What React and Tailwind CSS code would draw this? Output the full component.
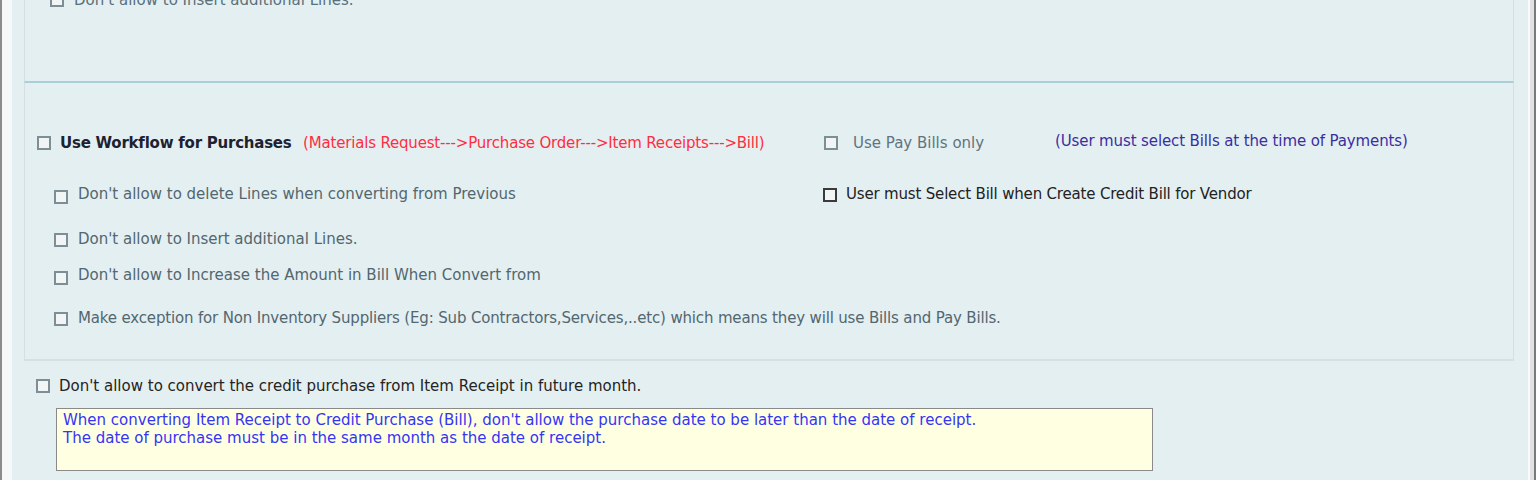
import React from 'react';

const font = "font-['DejaVu_Sans',sans-serif]";

const Box = ({ dark, className = '' }) => (
  <span
    className={`inline-block w-[14px] h-[14px] shrink-0 border-2 bg-[#f1f5f6] ${
      dark ? 'border-[#3a3a3a]' : 'border-[#7d8e95]'
    } ${className}`}
  />
);

const Option = ({ text, dark, className = '', textClass = '', boxClass = '' }) => (
  <label className={`flex items-center h-[20px] whitespace-nowrap ${className}`}>
    <Box dark={dark} className={boxClass} />
    <span className={textClass}>{text}</span>
  </label>
);

const subOptions = [
  { text: "Don't allow to delete Lines when converting from Previous", mt: 'mt-[30px]', box: 'mt-[4px]' },
  { text: "Don't allow to Insert additional Lines.", mt: 'mt-[25px]', box: '' },
  { text: "Don't allow to Increase the Amount in Bill When Convert from", mt: 'mt-[16px]', box: 'mt-[4px]' },
  {
    text: "Make exception for Non Inventory Suppliers (Eg: Sub Contractors,Services,..etc) which means they will use Bills and Pay Bills.",
    mt: 'mt-[23px]',
    box: '',
    text2: 'tracking-[-0.16px]',
  },
];

const App = () => {
  return (
    <div className={`flex w-[1536px] h-[480px] overflow-hidden text-[15px] ${font}`}>
      <div className="w-[2px] bg-[#8c8c8c]" />
      <div className="w-[10px] bg-[#f7f9f9]" />

      <div className="flex-1 flex flex-col bg-[#e4eff2] pl-[12px] pr-[14px]">
        {/* previous panel, cut off at the top */}
        <div className="h-[83px] shrink-0 border-x border-[#d6e0e3] border-b-2 border-b-[#a9cfd9]">
          <Option
            text="Don't allow to Insert additional Lines."
            className="-mt-[10px] ml-[25px] gap-[10px] text-[#5a707a]"
          />
        </div>

        {/* purchases workflow panel */}
        <div className="h-[278px] shrink-0 border-x border-b-2 border-[#d8dfe1] pt-[49px]">
          <div className="flex items-center">
            <Option
              text="Use Workflow for Purchases"
              className="ml-[12px] gap-[9px] w-[266px]"
              textClass="font-bold text-[#1d2230] tracking-[-0.23px]"
            />
            <span className="text-[#ff2d3f] w-[521px] whitespace-nowrap tracking-[-0.18px]">
              (Materials Request---&gt;Purchase Order---&gt;Item Receipts---&gt;Bill)
            </span>
            <Option
              text="Use Pay Bills only"
              className="gap-[15px] w-[231px]"
              textClass="text-[#5f747e]"
            />
            <span className="text-[#3b2ea0] -mt-[4px] whitespace-nowrap tracking-[-0.12px]">
              (User must select Bills at the time of Payments)
            </span>
          </div>

          <div className="flex items-start">
            <div className="w-[798px] shrink-0 pl-[29px] text-[#52676f]">
              {subOptions.map((o, i) => (
                <Option
                  key={i}
                  text={o.text}
                  boxClass={o.box}
                  textClass={o.text2 || ''}
                  className={`${o.mt} gap-[10px]`}
                />
              ))}
            </div>
            <Option
              dark
              text="User must Select Bill when Create Credit Bill for Vendor"
              className="mt-[30px] gap-[9px] text-[#222222]"
              textClass="tracking-[-0.18px]"
            />
          </div>
        </div>

        {/* credit purchase date check */}
        <div className="pl-[12px] pt-[15px]">
          <Option
            text="Don't allow to convert the credit purchase from Item Receipt in future month."
            className="gap-[9px] text-[#242424]"
          />
          <div className="mt-[12px] ml-[20px] w-[1097px] h-[63px] border border-[#8a8a8a] bg-[#ffffe1] px-[6px] pt-[2px] leading-[18px] text-[#3535f5]">
            <div>When converting Item Receipt to Credit Purchase (Bill), don't allow the purchase date to be later than the date of receipt.</div>
            <div>The date of purchase must be in the same month as the date of receipt.</div>
          </div>
        </div>
      </div>

      <div className="w-[2px] bg-[#fafafa]" />
      <div className="w-[4px] bg-[#e2e2e2]" />
      <div className="w-[2px] bg-[#7a7a7a]" />
    </div>
  );
};

export default App;
